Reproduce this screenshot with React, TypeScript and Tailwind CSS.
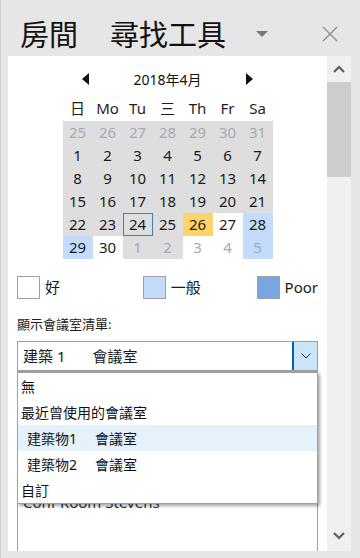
import React from "react";

const FONT = { fontFamily: '"Noto Sans", "Noto Sans CJK TC", sans-serif' };

type Cell = { d: number; muted?: boolean; bg?: string; today?: boolean };

const g = "bg-[#dedede]";
const rows: Cell[][] = [
  [25, 26, 27, 28, 29, 30, 31].map((d) => ({ d, muted: true, bg: g })),
  [1, 2, 3, 4, 5, 6, 7].map((d) => ({ d, bg: g })),
  [8, 9, 10, 11, 12, 13, 14].map((d) => ({ d, bg: g })),
  [15, 16, 17, 18, 19, 20, 21].map((d) => ({ d, bg: g })),
  [
    { d: 22, bg: g },
    { d: 23, bg: g },
    { d: 24, bg: g, today: true },
    { d: 25, bg: g },
    { d: 26, bg: "bg-[#ffd466]" },
    { d: 27, bg: "bg-white" },
    { d: 28, bg: "bg-[#c3dcfb]" },
  ],
  [
    { d: 29, bg: "bg-[#c3dcfb]" },
    { d: 30, bg: "bg-white" },
    { d: 1, muted: true, bg: g },
    { d: 2, muted: true, bg: g },
    { d: 3, muted: true, bg: "bg-white" },
    { d: 4, muted: true, bg: "bg-white" },
    { d: 5, muted: true, bg: "bg-[#c3dcfb]" },
  ],
];

const heads = ["日", "Mo", "Tu", "三", "Th", "Fr", "Sa"];

function Calendar() {
  return (
    <div className="w-[210px] mx-auto">
      <div className="flex items-center justify-between h-[32px] px-[19px] text-[14px] text-[#111]">
        <span className="w-0 h-0 border-y-[6px] border-y-transparent border-r-[7px] border-r-[#111]" />
        <span>2018年4月</span>
        <span className="w-0 h-0 border-y-[6px] border-y-transparent border-l-[7px] border-l-[#111]" />
      </div>
      <div className="grid grid-cols-7 h-[26px] items-center text-center text-[15px] text-[#1e1e1e]">
        {heads.map((h) => (
          <span key={h}>{h}</span>
        ))}
      </div>
      {rows.map((r, i) => (
        <div key={i} className="grid grid-cols-7 h-[23px] text-center text-[15px] leading-[23px]">
          {r.map((c, j) => (
            <div
              key={j}
              className={`${c.bg} ${c.muted ? "text-[#a3abb6]" : "text-[#1a1a1a]"} ${
                c.today ? "border border-[#3b7fc4] leading-[21px]" : ""
              }`}
            >
              {c.d}
            </div>
          ))}
        </div>
      ))}
    </div>
  );
}

function Legend({ color, label, w }: { color: string; label: string; w: string }) {
  return (
    <div className={`flex items-center gap-[5px] ${w}`}>
      <span className={`w-[23px] h-[23px] border border-[#a0a0a0] ${color}`} />
      <span className="text-[15px] text-[#1a1a1a]">{label}</span>
    </div>
  );
}

const menu = [
  { a: "無" },
  { a: "最近曾使用的會議室" },
  { a: "建築物1", b: "會議室", hl: true, indent: true },
  { a: "建築物2", b: "會議室", indent: true },
  { a: "自訂" },
];

export default function App() {
  return (
    <div style={FONT} className="w-[360px] h-[558px] bg-[#e6e6e6] flex flex-col overflow-hidden border-l border-[#cfcfcf]">
      {/* header */}
      <div className="h-[56px] flex items-center pl-[19px] pr-[22px] pt-[12px] text-[29px] leading-none text-[#111]">
        <span>房間</span>
        <span className="ml-[32px]">尋找工具</span>
        <span className="ml-[30px] w-0 h-0 border-x-[6px] border-x-transparent border-t-[6px] border-t-[#7a7a7a]" />
        <svg className="ml-auto" width="16" height="16" viewBox="0 0 16 16">
          <path d="M1 1L15 15M15 1L1 15" stroke="#8a8a8a" strokeWidth="1.2" />
        </svg>
      </div>

      <div className="flex flex-1 min-h-0 pl-[7px] pr-[9px] pb-[7px]">
        {/* panel */}
        <div className="flex-1 bg-white flex flex-col px-[9px] pt-[7px] overflow-hidden">
          <Calendar />

          <div className="flex mt-[17px]">
            <Legend color="bg-white" label="好" w="w-[126px]" />
            <Legend color="bg-[#c3dcfb]" label="一般" w="w-[114px]" />
            <Legend color="bg-[#79a5e0]" label="Poor" w="" />
          </div>

          <div className="mt-[15px] text-[13px] text-[#1a1a1a] leading-[20px]">顯示會議室清單:</div>

          <div className="relative mt-[7px]">
            <div className="flex h-[31px] border border-[#a0a0a0] border-b-2">
              <div className="flex-1 flex items-center pl-[5px] text-[15px] text-[#1a1a1a]">
                <span>建築 1</span>
                <span className="ml-[27px]">會議室</span>
              </div>
              <div className="w-[25px] bg-[#cce4f7] border-l-2 border-[#0063b1] flex items-center justify-center">
                <svg width="10" height="6" viewBox="0 0 10 6">
                  <path d="M0.5 0.5L5 5L9.5 0.5" fill="none" stroke="#333" strokeWidth="1" />
                </svg>
              </div>
            </div>

            {/* list under the menu */}
            <div className="h-[200px] border-x border-[#a0a0a0] pt-[119px] pl-[5px] text-[15px] text-[#333]">
              Conf Room Stevens
            </div>

            {/* dropdown menu */}
            <div className="absolute left-0 right-0 top-[31px] bg-white border border-[#a0a0a0] shadow-[2px_2px_3px_rgba(0,0,0,0.35)] text-[14px] text-[#111]">
              {menu.map((m, i) => (
                <div
                  key={i}
                  className={`h-[26px] flex items-center whitespace-nowrap ${m.indent ? "pl-[9px]" : "pl-[3px]"} ${
                    m.hl ? "bg-[#e5f1fb]" : ""
                  }`}
                >
                  <span className={m.b ? "w-[68px]" : ""}>{m.a}</span>
                  {m.b && <span>{m.b}</span>}
                </div>
              ))}
            </div>
          </div>
        </div>

        {/* scrollbar */}
        <div className="w-[24px] bg-[#f0f0f0] flex flex-col items-center">
          <div className="h-[26px] w-full flex items-center justify-center">
            <svg width="12" height="8" viewBox="0 0 12 8">
              <path d="M1 7L6 2L11 7" fill="none" stroke="#5f5f5f" strokeWidth="2.2" />
            </svg>
          </div>
          <div className="w-full h-[95px] bg-[#cdcdcd]" />
          <div className="flex-1" />
          <div className="h-[26px] w-full flex items-center justify-center mb-[2px]">
            <svg width="12" height="8" viewBox="0 0 12 8">
              <path d="M1 1L6 6L11 1" fill="none" stroke="#5f5f5f" strokeWidth="2.2" />
            </svg>
          </div>
        </div>
      </div>
    </div>
  );
}
